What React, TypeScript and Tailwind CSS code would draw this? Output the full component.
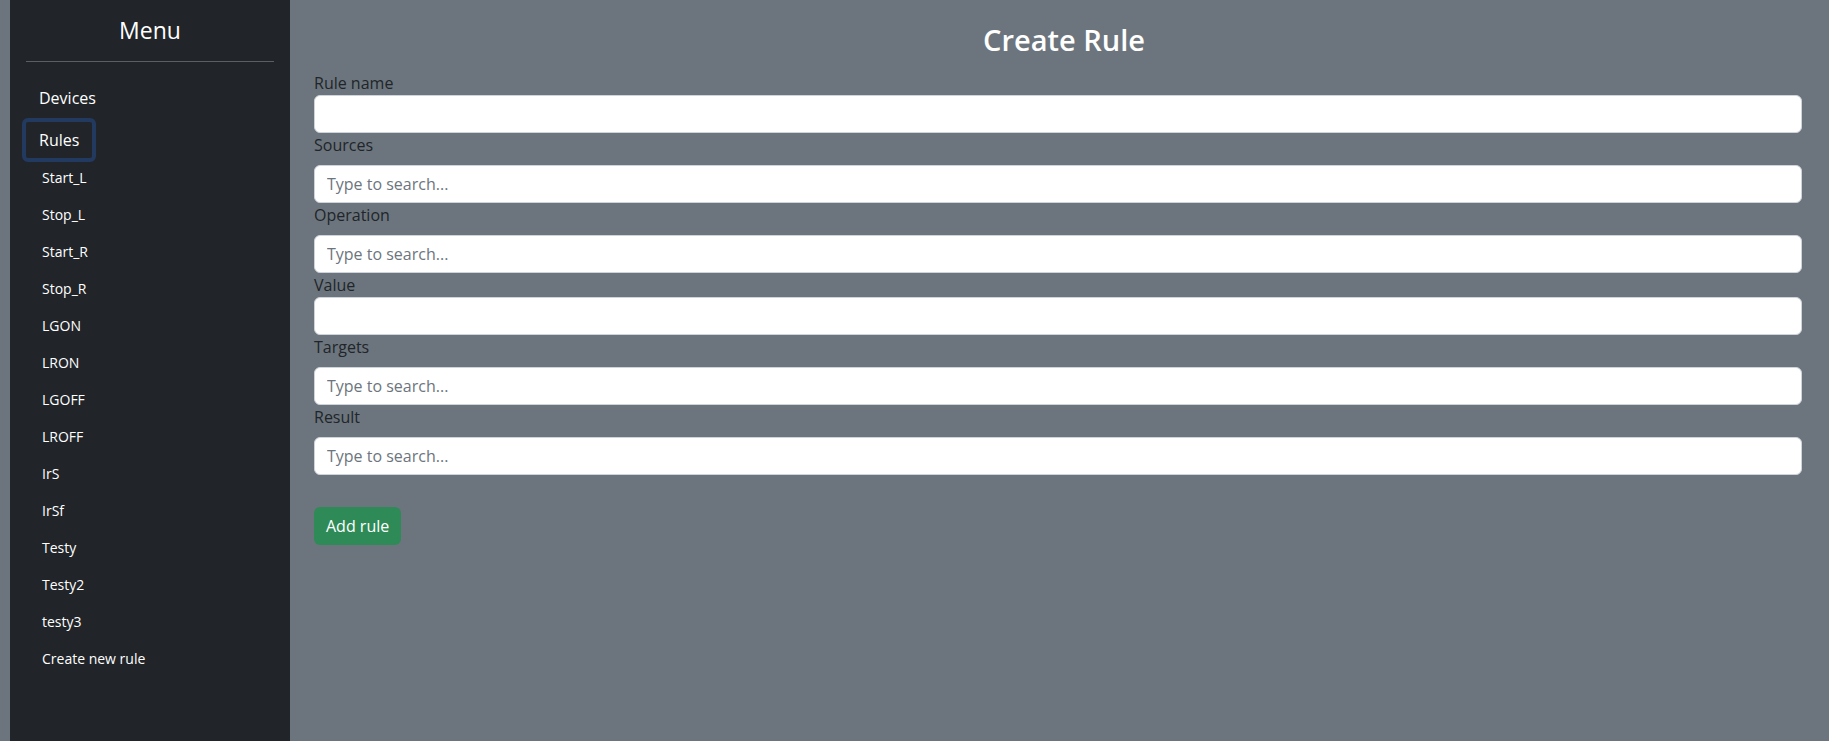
import { useState } from "react";

const rules = [
    "Start_L",
    "Stop_L",
    "Start_R",
    "Stop_R",
    "LGON",
    "LRON",
    "LGOFF",
    "LROFF",
    "IrS",
    "IrSf",
    "Testy",
    "Testy2",
    "testy3",
    "Create new rule"
];

const fields = [
    { label: "Rule name", search: false },
    { label: "Sources", search: true },
    { label: "Operation", search: true },
    { label: "Value", search: false },
    { label: "Targets", search: true },
    { label: "Result", search: true }
];

const App = () => {
    const [values, setValues] = useState<Record<string, string>>({});

    return (
        <div className="w-screen min-h-screen bg-[#6c757d] flex font-['Open_Sans','Noto_Sans',sans-serif] text-[#212529]">
            <div className="ml-[10px] w-[280px] shrink-0 min-h-screen bg-[#212529] text-white px-4 pt-4">
                <h4 className="text-[23px] leading-[29px] text-center">Menu</h4>
                <hr className="my-4 border-0 h-px bg-[#5b5f63]" />
                <div className="flex flex-col">
                    <a className="px-[13px] py-2 leading-6 text-white w-fit">Devices</a>
                    <a className="-ml-1 px-[13px] py-[6px] leading-6 text-white w-fit border-4 border-[#233a60] rounded-md">Rules</a>
                    <div className="flex flex-col -mt-[3px]">
                        {rules.map(rule => (
                            <a key={rule} className="pl-4 py-2 text-[14px] leading-[21px] text-white">{rule}</a>
                        ))}
                    </div>
                </div>
            </div>
            <div className="flex-1 pl-6 pr-[27px] pt-[21px]">
                <h2 className="text-[29px] leading-[38px] font-semibold text-white text-center mb-3 pl-3">Create Rule</h2>
                <div className="flex flex-col">
                    {fields.map(field => (
                        <div key={field.label} className="flex flex-col">
                            <label className="leading-6">{field.label}</label>
                            <input
                                className={`w-full h-[38px] bg-white border border-[#ced4da] rounded-md px-3 outline-none placeholder:text-[#6c757d] ${field.search ? "mt-2" : ""}`}
                                placeholder={field.search ? "Type to search..." : ""}
                                value={values[field.label] ?? ""}
                                onChange={e => setValues({ ...values, [field.label]: e.target.value })}
                            />
                        </div>
                    ))}
                </div>
                <button className="mt-8 h-[38px] px-3 bg-[#2e8b57] text-white rounded-md">Add rule</button>
            </div>
        </div>
    );
};

export default App;
